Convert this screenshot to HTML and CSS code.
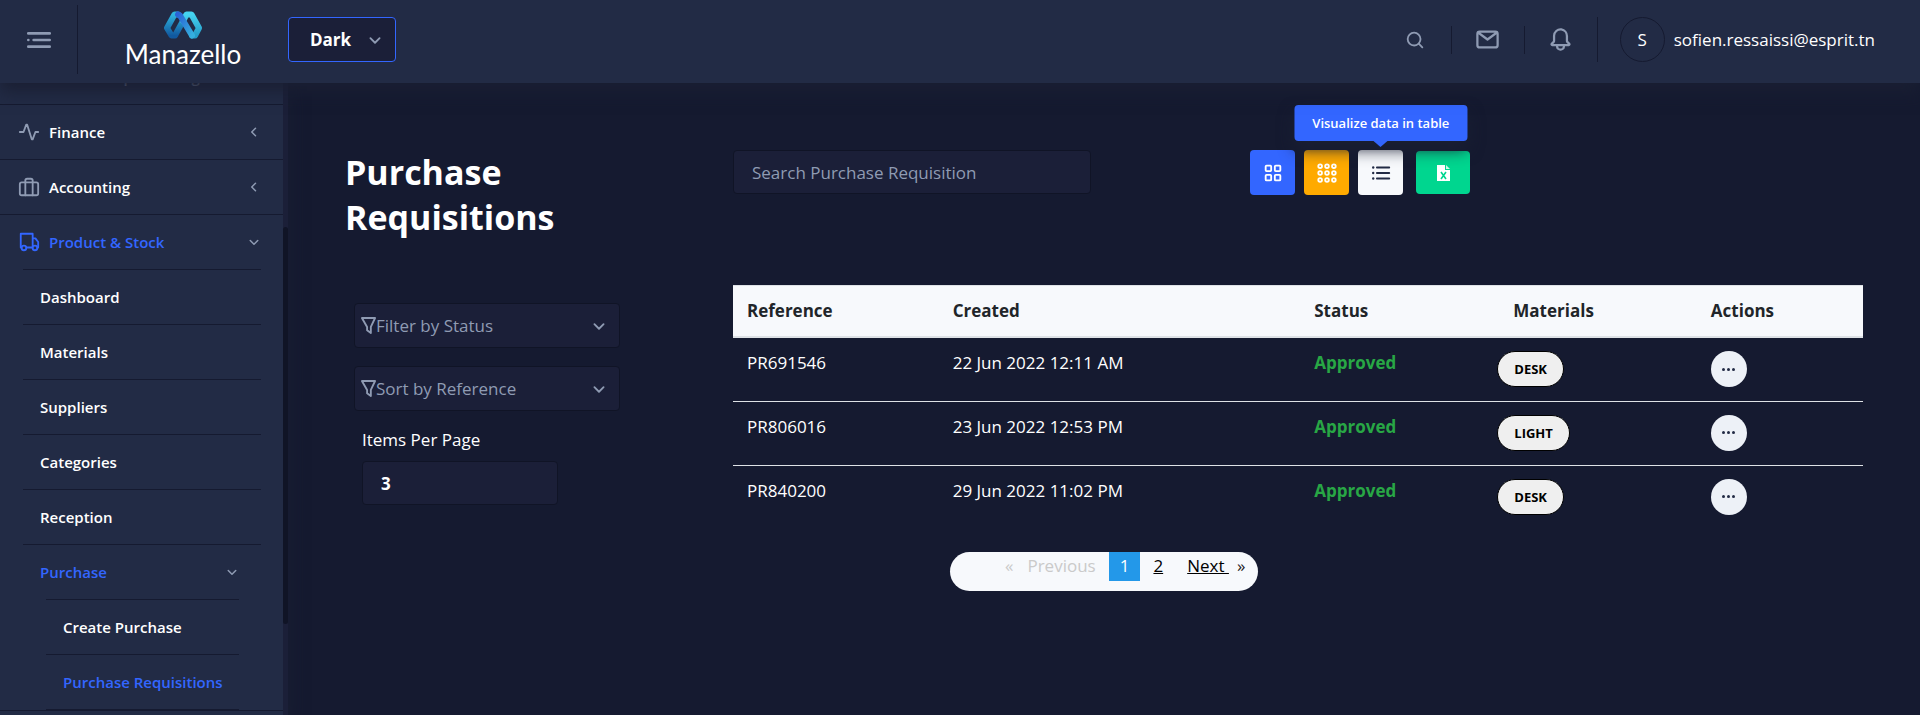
FILE: index.html
```html
<!DOCTYPE html>
<html lang="en">
<head>
<meta charset="utf-8">
<title>Manazello - Purchase Requisitions</title>
<link rel="stylesheet" href="styles.css">
</head>
<body>
<svg class="sprite" aria-hidden="true">
  <symbol id="chevron-down" viewBox="0 0 24 24"><path d="M7 10l5 5 5-5"/></symbol>
  <symbol id="chevron-left" viewBox="0 0 24 24"><path d="M14 7l-5 5 5 5"/></symbol>
  <symbol id="funnel" viewBox="4 4 16 18"><path d="M5 5h14l-4.500 9.500V21l-4-3v-3.500z"/></symbol>
</svg>

<header class="header">
  <button class="menu-toggle" type="button" aria-label="Toggle menu">
    <svg class="icon-xl" viewBox="0 0 24 24" fill="currentColor"><circle cx="4" cy="12" r="1"/><rect x="7" y="11" width="14" height="2" rx=".94"/><rect x="3" y="16" width="18" height="2" rx=".94"/><rect x="3" y="6" width="18" height="2" rx=".94"/></svg>
  </button>
  <a class="logo" href="#">
    <svg class="logo-mark" viewBox="0 0 38 28" fill="none" stroke-width="6" stroke-linejoin="round" stroke-linecap="round">
      <defs>
        <linearGradient id="g1" x1="0" y1="0" x2="0" y2="1"><stop offset="0" stop-color="#2fb4dd"/><stop offset="1" stop-color="#11599f"/></linearGradient>
        <linearGradient id="g2" x1="0" y1="0" x2="0" y2="1"><stop offset="0" stop-color="#45d3f0"/><stop offset="1" stop-color="#249cc8"/></linearGradient>
        <linearGradient id="g3" x1="0" y1="0" x2="1" y2="1"><stop offset="0" stop-color="#2a63d6"/><stop offset="1" stop-color="#35b0df"/></linearGradient>
      </defs>
      <path stroke="url(#g1)" d="M19 10L11 24.500H7.500L3 17L10.500 3.500H14"/>
      <path stroke="url(#g2)" d="M19 10L22.500 3.500H27.500L35 17L31 24.500H28"/>
      <path stroke="url(#g3)" d="M14 3.500L16 4.500L28 24.500"/>
    </svg>
    <span class="logo-name">Manazello</span>
  </a>
  <div class="theme">
    <select class="theme-select" aria-label="Theme"><option>Dark</option></select>
    <svg class="icon-md stroke-icon chevron"><use href="#chevron-down"/></svg>
  </div>
  <div class="actions">
    <button class="action" type="button" aria-label="Search">
      <svg class="icon-md" viewBox="0 0 24 24" fill="currentColor"><path d="M20.710 19.290l-3.400-3.390A7.920 7.920 0 0 0 19 11a8 8 0 1 0-8 8 7.920 7.920 0 0 0 4.900-1.690l3.390 3.400a1 1 0 0 0 1.420 0 1 1 0 0 0 0-1.420zM5 11a6 6 0 1 1 6 6 6 6 0 0 1-6-6z"/></svg>
    </button>
    <button class="action" type="button" aria-label="Messages">
      <svg class="icon-lg" viewBox="0 0 24 24" fill="currentColor"><path d="M19 4H5a3 3 0 0 0-3 3v10a3 3 0 0 0 3 3h14a3 3 0 0 0 3-3V7a3 3 0 0 0-3-3zm-.67 2L12 10.750 5.670 6zM19 18H5a1 1 0 0 1-1-1V7.250l7.400 5.550a1 1 0 0 0 .6.2 1 1 0 0 0 .6-.2L20 7.250V17a1 1 0 0 1-1 1z"/></svg>
    </button>
    <button class="action" type="button" aria-label="Notifications">
      <svg class="icon-lg" viewBox="0 0 24 24" fill="currentColor"><path d="M20.520 15.210l-1.800-1.810V8.940a6.860 6.860 0 0 0-5.820-6.880 6.740 6.740 0 0 0-7.620 6.670v4.670l-1.800 1.810A1.640 1.640 0 0 0 4.640 18H8v.34A3.840 3.840 0 0 0 12 22a3.840 3.840 0 0 0 4-3.660V18h3.360a1.640 1.640 0 0 0 1.160-2.790zM14 18.340A1.880 1.880 0 0 1 12 20a1.880 1.880 0 0 1-2-1.660V18h4zM5.510 16l1.180-1.180a2 2 0 0 0 .59-1.420V8.730A4.730 4.730 0 0 1 8.900 5.170 4.670 4.670 0 0 1 12.640 4a4.860 4.860 0 0 1 4.080 4.900v4.500a2 2 0 0 0 .58 1.420L18.490 16z"/></svg>
    </button>
    <a class="user" href="#"><span class="avatar">S</span><span>sofien.ressaissi@esprit.tn</span></a>
  </div>
</header>

<div class="shell">
  <nav class="sidebar" aria-label="Main menu">
    <ul class="menu">
      <li class="menu-group">Workshop Planning</li>
      <li><a class="item" href="#">
        <svg class="icon-md stroke-icon" viewBox="0 0 24 24"><path d="M2 12h4L9 4h1l5 16h1l3-8h3"/></svg>
        <span class="label">Finance</span><svg class="icon-sm stroke-icon"><use href="#chevron-left"/></svg></a></li>
      <li><a class="item" href="#">
        <svg class="icon-md stroke-icon" viewBox="0 0 24 24"><rect x="2" y="7" width="20" height="14" rx="2"/><path d="M8 21V5a2 2 0 0 1 2-2h4a2 2 0 0 1 2 2v16"/></svg>
        <span class="label">Accounting</span><svg class="icon-sm stroke-icon"><use href="#chevron-left"/></svg></a></li>
      <li><a class="item active" href="#">
        <svg class="icon-md stroke-icon" viewBox="0 0 24 24"><path d="M3 18V3H16v15H3M16 8h3l3 4v6H16"/><circle class="wheel" cx="6.500" cy="18.500" r="2.500"/><circle class="wheel" cx="18.500" cy="18.500" r="2.500"/></svg>
        <span class="label">Product &amp; Stock</span><svg class="icon-sm stroke-icon"><use href="#chevron-down"/></svg></a>
        <ul class="submenu">
          <li><a class="item" href="#">Dashboard</a></li>
          <li><a class="item" href="#">Materials</a></li>
          <li><a class="item" href="#">Suppliers</a></li>
          <li><a class="item" href="#">Categories</a></li>
          <li><a class="item" href="#">Reception</a></li>
          <li><a class="item active" href="#"><span class="label">Purchase</span><svg class="icon-sm stroke-icon"><use href="#chevron-down"/></svg></a>
            <ul class="submenu">
              <li><a class="item" href="#">Create Purchase</a></li>
              <li class="last"><a class="item active" href="#">Purchase Requisitions</a></li>
            </ul>
          </li>
        </ul>
      </li>
    </ul>
    <div class="scroll-track"><div class="scroll-thumb"></div></div>
  </nav>

  <main class="content">
    <h1 class="title">Purchase Requisitions</h1>
    <div class="search">
      <input class="field" type="text" placeholder="Search Purchase Requisition" aria-label="Search Purchase Requisition">
    </div>
    <div class="views">
      <button class="view blue" type="button" aria-label="Cards">
        <svg class="icon-md stroke-icon" viewBox="0 0 24 24"><rect x="4" y="4" width="6" height="6" rx="1"/><rect x="14" y="4" width="6" height="6" rx="1"/><rect x="4" y="14" width="6" height="6" rx="1"/><rect x="14" y="14" width="6" height="6" rx="1"/></svg>
      </button>
      <button class="view orange" type="button" aria-label="Small cards">
        <svg class="icon-md stroke-icon" viewBox="0 0 24 24"><circle cx="4.500" cy="4.500" r="2"/><circle cx="12" cy="4.500" r="2"/><circle cx="19.500" cy="4.500" r="2"/><circle cx="4.500" cy="12" r="2"/><circle cx="12" cy="12" r="2"/><circle cx="19.500" cy="12" r="2"/><circle cx="4.500" cy="19.500" r="2"/><circle cx="12" cy="19.500" r="2"/><circle cx="19.500" cy="19.500" r="2"/></svg>
      </button>
      <button class="view white" type="button" aria-label="Table" aria-describedby="tip">
        <svg class="icon-md" viewBox="0 0 24 24" fill="currentColor"><circle cx="3.500" cy="6" r="1.300"/><circle cx="3.500" cy="12" r="1.300"/><circle cx="3.500" cy="18" r="1.300"/><rect x="6.500" y="5" width="15.500" height="2" rx="1"/><rect x="6.500" y="11" width="15.500" height="2" rx="1"/><rect x="6.500" y="17" width="15.500" height="2" rx="1"/></svg>
        <span class="tooltip" id="tip" role="tooltip">Visualize data in table</span>
      </button>
      <button class="view green" type="button" aria-label="Export to Excel">
        <svg class="excel" viewBox="0 0 13 16"><path fill="#fff" d="M0 0h8v5h5v11H0z"/><path fill="#d4f5e8" d="M9 0l4 4H9z"/><path fill="none" stroke="#00d68f" stroke-width="1.600" d="M4 7l5 7M9 7l-5 7"/></svg>
      </button>
    </div>

    <div class="filters">
      <div class="picker">
        <svg class="funnel stroke-icon"><use href="#funnel"/></svg>
        <select aria-label="Filter by Status"><option>Filter by Status</option></select>
        <svg class="icon-md stroke-icon chevron"><use href="#chevron-down"/></svg>
      </div>
      <div class="picker">
        <svg class="funnel stroke-icon"><use href="#funnel"/></svg>
        <select aria-label="Sort by Reference"><option>Sort by Reference</option></select>
        <svg class="icon-md stroke-icon chevron"><use href="#chevron-down"/></svg>
      </div>
      <div class="per-page">
        <label for="per-page">Items Per Page</label>
        <input class="field strong" id="per-page" type="text" value="3">
      </div>
    </div>

    <div class="results">
      <table class="table">
        <colgroup><col class="c-ref"><col class="c-date"><col class="c-status"><col class="c-mat"><col class="c-act"></colgroup>
        <thead><tr><th>Reference</th><th>Created</th><th>Status</th><th class="indent">Materials</th><th>Actions</th></tr></thead>
        <tbody>
          <tr><td>PR691546</td><td>22 Jun 2022 12:11 AM</td><td class="approved">Approved</td><td><button class="chip" type="button">DESK</button></td><td><button class="more" type="button" aria-label="Actions"><i></i><i></i><i></i></button></td></tr>
          <tr><td>PR806016</td><td>23 Jun 2022 12:53 PM</td><td class="approved">Approved</td><td><button class="chip" type="button">LIGHT</button></td><td><button class="more" type="button" aria-label="Actions"><i></i><i></i><i></i></button></td></tr>
          <tr><td>PR840200</td><td>29 Jun 2022 11:02 PM</td><td class="approved">Approved</td><td><button class="chip" type="button">DESK</button></td><td><button class="more" type="button" aria-label="Actions"><i></i><i></i><i></i></button></td></tr>
        </tbody>
      </table>
      <ul class="pagination">
        <li class="disabled"><span class="arrow">«</span>Previous</li>
        <li class="current">1</li>
        <li><a href="#">2</a></li>
        <li><a href="#">Next&nbsp;</a><span class="arrow">»</span></li>
      </ul>
    </div>
  </main>
</div>
</body>
</html>
```
FILE: styles.css
```css
* { box-sizing: border-box; }

html, body { height: 100%; }

body {
  margin: 0;
  display: flex;
  flex-direction: column;
  overflow: hidden;
  background: #151a30;
  color: #fff;
  font-family: "Open Sans", "Noto Sans", sans-serif;
  font-size: 17px;
  line-height: 26px;
}

button, input, select { font: inherit; color: inherit; }
button { cursor: pointer; padding: 0; border: 0; background: none; }
a { color: inherit; text-decoration: none; }
ul { list-style: none; margin: 0; padding: 0; }
select { appearance: none; border: 0; background: none; outline: 0; padding: 0; }
svg { display: block; flex: none; }

.sprite { position: absolute; width: 0; height: 0; }
.icon-sm { width: 18px; height: 18px; }
.icon-md { width: 22px; height: 22px; }
.icon-lg { width: 27px; height: 27px; }
.icon-xl { width: 32px; height: 32px; }
.stroke-icon { fill: none; stroke: currentColor; stroke-width: 2; stroke-linecap: round; stroke-linejoin: round; }

/* Header */
.header {
  position: relative;
  z-index: 2;
  flex: none;
  display: flex;
  align-items: center;
  height: 83px;
  padding: 0 45px 4px 0;
  background: #222b45;
  box-shadow: 0 8px 16px #1a1f33;
}
.menu-toggle {
  display: grid;
  place-items: center;
  width: 78px;
  height: 69px;
  border-right: 1px solid #151a30;
  color: #8f9bb3;
}
.logo {
  display: flex;
  flex-direction: column;
  align-items: center;
  width: 210px;
}
.logo-mark { width: 38px; height: 28px; }
.logo-name {
  font-family: Lato, sans-serif;
  font-size: 26px;
  line-height: 30px;
}
.theme {
  display: grid;
  align-items: center;
  width: 108px;
  height: 45px;
  border: 1px solid #3366ff;
  border-radius: 4px;
  background: #1b1f38;
}
.theme > *, .theme-select { grid-area: 1 / 1; }
.theme-select { height: 43px; padding-left: 21px; font-weight: 700; }
.chevron { color: #8f9bb3; pointer-events: none; }
.theme .chevron { justify-self: end; margin-right: 9px; }
.actions { display: flex; align-items: center; margin-left: auto; }
.action {
  display: grid;
  place-items: center;
  width: 73px;
  height: 28px;
  border-right: 1px solid #151a30;
  color: #8f9bb3;
}
.action:nth-child(3) { height: 45px; }
.user { display: flex; align-items: center; gap: 9px; padding-left: 22px; }
.avatar {
  display: grid;
  place-items: center;
  width: 45px;
  height: 45px;
  border: 1px solid #151a30;
  border-radius: 50%;
}

/* Sidebar */
.shell { flex: 1; min-height: 0; display: flex; }
.sidebar {
  flex: none;
  display: flex;
  width: 288px;
  overflow: hidden;
  background: #222b45;
  box-shadow: 0 8px 16px #1a1f33;
  font-size: 15px;
  font-weight: 600;
  line-height: 24px;
  white-space: nowrap;
}
.menu { flex: 1; min-width: 0; margin-top: -33px; }
.menu > li { border-bottom: 1px solid #151a30; }
.menu > .menu-group { height: 55px; padding-left: 59px; line-height: 54px; color: #8f9bb3; }
.item {
  display: flex;
  align-items: center;
  gap: 9px;
  height: 54px;
  padding: 0 20px 0 18px;
}
.item > svg { color: #8f9bb3; }
.label { flex: 1; }
.active { color: #3366ff; }
.active > .icon-md { color: #3366ff; }
.wheel { fill: #222b45; }
.submenu { margin: 0 22px 0 23px; }
.submenu > li { border-top: 1px solid #151a30; }
.submenu > .last { border-bottom: 1px solid #151a30; }
.submenu .item { padding: 0 20px 0 17px; }
.scroll-track { flex: none; width: 5px; padding-top: 144px; background: #1b1f38; }
.scroll-thumb { height: 397px; border-radius: 3px; background: #101426; }

/* Content */
.content {
  flex: 1;
  display: grid;
  grid-template-columns: repeat(12, 1fr);
  grid-template-rows: auto 1fr;
  row-gap: 45px;
  padding: 67px 43px 0 45px;
}
.content > * { padding: 0 14px; }
.title {
  grid-column: span 3;
  max-width: 280px;
  margin: 0;
  font-size: 34px;
  font-weight: 700;
  line-height: 45px;
}
.content > .title { padding-left: 12px; }
.search { grid-column: span 3; }
.field {
  display: block;
  width: 100%;
  height: 44px;
  padding: 0 18px;
  border: 1px solid #101426;
  border-radius: 4px;
  background: #1b1f38;
}
.field::placeholder { color: #8f9bb3; opacity: 1; }
.strong { font-weight: 700; }

.views { grid-column: span 4; display: flex; justify-content: center; gap: 9px; }
.content > .views { padding-right: 18px; }
.view {
  position: relative;
  display: grid;
  place-items: center;
  width: 45px;
  height: 45px;
  border-radius: 4px;
}
.blue { background: #3366ff; }
.orange { background: #ffaa00; }
.white { z-index: 1; background: #f7f9fc; color: #222b45; }
.green { width: 54px; height: 43px; margin: 1px 0 0 4px; background: #00d68f; }
.excel { width: 13px; height: 16px; }
.tooltip {
  position: absolute;
  bottom: 54px;
  left: 50%;
  transform: translateX(-50%);
  padding: 6px 18px;
  border-radius: 4px;
  background: #3366ff;
  box-shadow: 0 8px 16px #1a1f33;
  color: #fff;
  font-size: 13px;
  font-weight: 600;
  line-height: 24px;
  white-space: nowrap;
}
.tooltip::after {
  content: "";
  position: absolute;
  top: 100%;
  left: 50%;
  margin-left: -7px;
  border: 7px solid transparent;
  border-top: 6px solid #3366ff;
  border-bottom: 0;
}

.content > .filters { grid-column: span 3; padding: 18px 21px 0; }
.picker {
  display: flex;
  align-items: center;
  width: 266px;
  height: 45px;
  margin-bottom: 18px;
  padding: 0 9px 0 6px;
  border: 1px solid #101426;
  border-radius: 4px;
  background: #1b1f38;
  color: #8f9bb3;
}
.funnel { width: 15px; height: 17px; }
.picker select { flex: 1; height: 43px; }
.per-page { width: 212px; padding: 0 8px; }
.per-page label { display: block; margin-bottom: 10px; line-height: 22px; }

.results { grid-column: span 9; }
.table { width: 100%; table-layout: fixed; border-collapse: collapse; }
.c-ref { width: 18.2%; }
.c-date { width: 32%; }
.c-status { width: 16.2%; }
.c-mat { width: 18.9%; }
.c-act { width: 14.7%; }
.table th {
  padding: 12px 14px;
  background: #f7f9fc;
  border-top: 1px solid #dee2e6;
  border-bottom: 2px solid #dee2e6;
  color: #212529;
  font-weight: 700;
  text-align: left;
}
.table .indent { padding-left: 30px; }
.table td { height: 64px; padding: 12px 14px 13px; border-top: 1px solid #dee2e6; vertical-align: top; }
.table .approved { color: #28a745; font-weight: 700; }
.chip, .more { margin-top: 1px; height: 36px; }
.chip {
  display: block;
  padding: 0 16px;
  border: 1px solid #000;
  border-radius: 18px;
  background: #efefef;
  color: #000;
  font-size: 13px;
  font-weight: 700;
}
.more {
  display: flex;
  align-items: center;
  justify-content: center;
  gap: 2px;
  width: 36px;
  border-radius: 50%;
  background: #edf1f7;
}
.more i { width: 3px; height: 3px; border-radius: 50%; background: #222b45; }

.pagination {
  display: flex;
  align-items: flex-start;
  gap: 2px;
  width: 308px;
  height: 39px;
  margin: 23px 0 0 217px;
  padding-left: 40px;
  border-radius: 20px;
  background: #f7f9fc;
  color: #222;
}
.pagination li { padding: 1px 11px 2px; }
.pagination a { color: #000; text-decoration: underline; }
.pagination .disabled { padding-left: 7px; color: #cacaca; }
.disabled .arrow { margin-right: 14px; }
.pagination li:last-child { padding-right: 0; }
.pagination .arrow:last-child { margin-left: 8px; }
.pagination .current { background: #2398e9; color: #fff; }
```
